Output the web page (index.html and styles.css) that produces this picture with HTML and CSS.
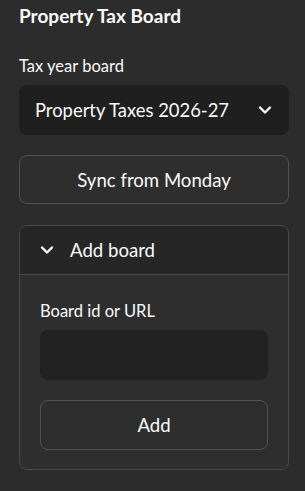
FILE: index.html
```html
<!DOCTYPE html>
<html>
<head>
<meta charset="utf-8">
<link rel="stylesheet" href="styles.css">
</head>
<body>
<div class="sidebar">
  <h2 class="title">Property Tax Board</h2>
  <div class="field">
    <label class="label">Tax year board</label>
    <div class="select">
      <span>Property Taxes 2026-27</span>
      <svg class="chev" width="14" height="10" viewBox="0 0 14 10"><path d="M2 2.5 L7 7.5 L12 2.5" fill="none" stroke="#fafafa" stroke-width="2.4" stroke-linecap="round" stroke-linejoin="round"/></svg>
    </div>
  </div>
  <button class="btn sync">Sync from Monday</button>
  <div class="expander">
    <div class="exp-head">
      <svg class="chev" width="14" height="10" viewBox="0 0 14 10"><path d="M2 2.5 L7 7.5 L12 2.5" fill="none" stroke="#fafafa" stroke-width="2.4" stroke-linecap="round" stroke-linejoin="round"/></svg>
      <span>Add board</span>
    </div>
    <div class="exp-body">
      <label class="label">Board id or URL</label>
      <div class="input"></div>
      <button class="btn add">Add</button>
    </div>
  </div>
</div>
</body>
</html>
```
FILE: styles.css
```css
html, body {
  margin: 0;
  padding: 0;
  background: #2c2c2c;
}
body {
  font-family: Lato, "Liberation Sans", sans-serif;
  color: #fafafa;
}
.sidebar {
  padding: 4px 16px 0 19px;
  width: 270px;
}
.title {
  margin: 0;
  font-size: 19px;
  font-weight: 700;
  line-height: 23px;
}
.field {
  margin-top: 29px;
}
.label {
  display: block;
  font-size: 16.5px;
  line-height: 20px;
  margin-bottom: 9px;
}
.select {
  height: 50px;
  box-sizing: border-box;
  background: #1f1f1f;
  border-radius: 8px;
  display: flex;
  align-items: center;
  justify-content: space-between;
  padding: 0 17px 0 16px;
  font-size: 18.4px;
}
.btn {
  display: block;
  width: 100%;
  height: 49px;
  box-sizing: border-box;
  background: #2e2e2e;
  border: 1px solid #525252;
  border-radius: 8px;
  color: #fafafa;
  font-family: inherit;
  font-size: 18.6px;
  padding: 0;
}
.sync {
  margin-top: 20px;
}
.expander {
  margin-top: 21px;
  border: 1px solid #4a4a4a;
  border-radius: 8px;
  overflow: hidden;
  background: #2e2e2e;
}
.exp-head {
  height: 49px;
  box-sizing: border-box;
  background: #262626;
  border-bottom: 1px solid #4a4a4a;
  display: flex;
  align-items: center;
  padding-left: 20px;
  gap: 16px;
  font-size: 18.6px;
}
.exp-body {
  padding: 26px 20px 19px 20px;
}
.input {
  height: 50px;
  background: #222222;
  border-radius: 8px;
}
.add {
  margin-top: 20px;
  height: 50px;
}
```
